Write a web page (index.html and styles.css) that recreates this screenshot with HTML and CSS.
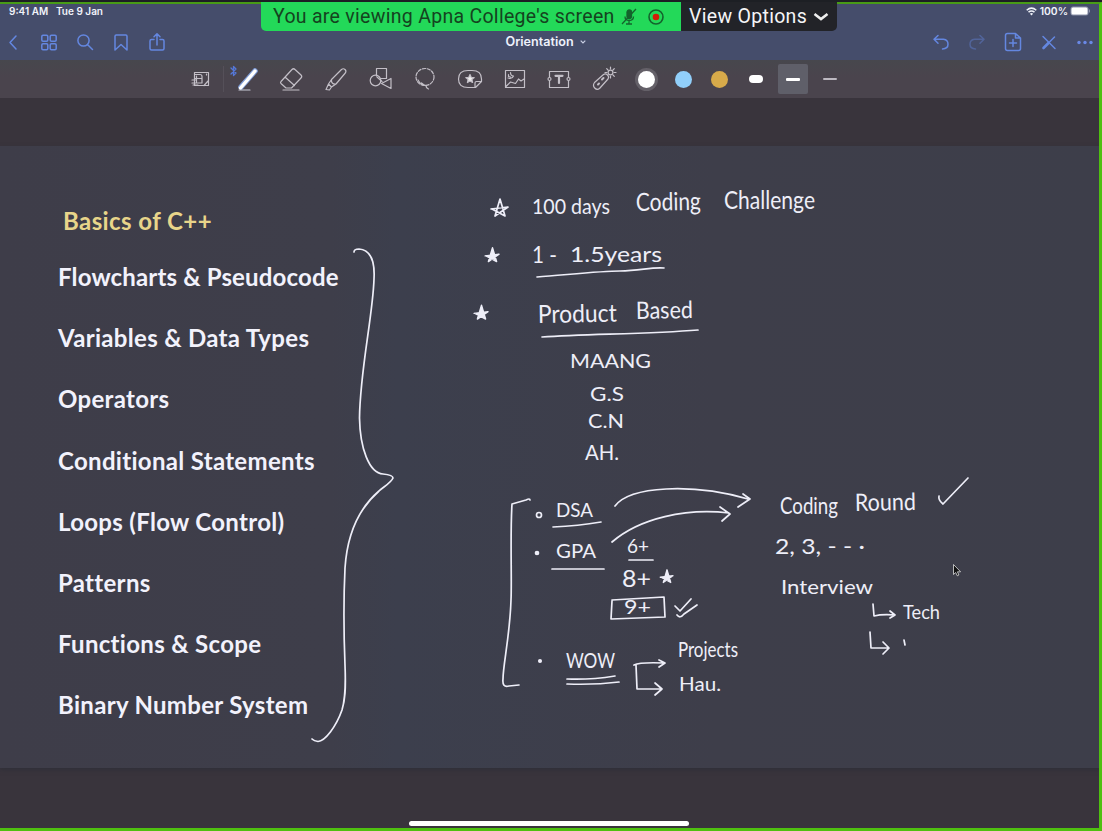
FILE: index.html
```html
<!DOCTYPE html>
<html lang="en">
<head>
<meta charset="utf-8">
<title>Orientation</title>
<link rel="stylesheet" href="styles.css">
</head>
<body>
<div class="screen">
  <header class="header">
    <div class="status">
      <span class="status-time">9:41 AM</span><span class="status-date">Tue 9 Jan</span>
      <span class="status-right">
        <svg width="11" height="9" viewBox="0 0 11 9" fill="none" stroke="#f1f3fa" stroke-width="1.5"><path d="M.7 3.2Q5.500-1 10.300 3.200M2.500 5.200Q5.500 2.700 8.500 5.200"/><path d="M5.500 8.500 3.900 6.700Q5.500 5.500 7.100 6.700Z" fill="#f1f3fa" stroke="none"/></svg>
        <span class="status-battery">100%</span>
        <svg width="21" height="10" viewBox="0 0 21 10"><rect x=".5" y=".5" width="18" height="9" rx="2.500" fill="#8b91a8"/><rect x="1.500" y="1.500" width="16" height="7" rx="1.500" fill="#fff"/><path d="M19.500 3.500v3" stroke="#8b91a8"/></svg>
      </span>
    </div>
    <nav class="nav">
      <div class="nav-group nav-left">
        <span class="btn"><svg width="20" height="20" viewBox="0 0 20 20"><path d="M13 4 7 10.500l6 6.500"/></svg></span>
        <span class="btn"><svg width="20" height="20" viewBox="0 0 20 20"><rect x="2.800" y="3.300" width="6" height="6" rx="1.200"/><rect x="11.200" y="3.300" width="6" height="6" rx="1.200"/><rect x="2.800" y="11.700" width="6" height="6" rx="1.200"/><rect x="11.200" y="11.700" width="6" height="6" rx="1.200"/></svg></span>
        <span class="btn"><svg width="20" height="20" viewBox="0 0 20 20"><circle cx="8.500" cy="8.500" r="5.600"/><path d="m12.700 12.700 4.800 4.800"/></svg></span>
        <span class="btn"><svg width="20" height="20" viewBox="0 0 20 20"><path d="M4 18V4.200Q4 3 5.200 3h9.600Q16 3 16 4.200V18l-6-5.500Z"/></svg></span>
        <span class="btn"><svg width="20" height="20" viewBox="0 0 20 20"><path d="M7 7.500H4.500Q3 7.500 3 9v7.500Q3 18 4.500 18h11q1.500 0 1.500-1.500V9q0-1.500-1.500-1.500H13M10 13V2M7 4.700 10 1.700l3 3"/></svg></span>
      </div>
      <div class="doc-title">Orientation <svg width="6" height="4" viewBox="0 0 6 4"><path d="m.7.700 2.300 2.300L5.300.7"/></svg></div>
      <div class="nav-group nav-right">
        <span class="btn"><svg width="20" height="20" viewBox="0 0 20 20"><path d="M7 3.500 3 7.300l4 4M3.500 7.300h9q4.500.5 4.500 5t-5.500 4.600"/></svg></span>
        <span class="btn btn-off"><svg width="20" height="20" viewBox="0 0 20 20"><path d="m13 3.500 4 3.800-4 4M16.500 7.300h-9Q3 7.800 3 12.300t5.500 4.600"/></svg></span>
        <span class="btn"><svg width="20" height="20" viewBox="0 0 20 20"><path d="M4.500 1.500h8L17.500 6v10.500q0 2-2 2h-11q-2 0-2-2v-13q0-2 2-2ZM12.500 1.500V6h5M10 7.500v7M6.500 11h7"/></svg></span>
        <span class="btn"><svg width="20" height="20" viewBox="0 0 20 20"><path d="m4 4.500 12 12M15.500 5 9.500 11"/><path d="m9.500 11-5 5" stroke-width="2.600"/></svg></span>
        <span class="btn"><svg width="20" height="20" viewBox="0 0 20 20"><g class="dots"><circle cx="4" cy="10.500" r="1.700"/><circle cx="10" cy="10.500" r="1.700"/><circle cx="16" cy="10.500" r="1.700"/></g></svg></span>
      </div>
    </nav>
  </header>

  <div class="tools">
    <span class="tool tool-view"><svg width="26" height="26" viewBox="0 0 26 26"><path d="M6.500 6.500h14v13h-14ZM7 8.500h5q2 0 2 2v6.500H7M7 12.500h6.500M8.500 10v6M4 14h4M4 17h5M5 19h5M20 15l-4 4.500M18.500 8v1"/></svg></span>
    <span class="tool"><svg width="40" height="34" viewBox="0 0 40 34"><path d="m4 6 5 5-2.500 2.500v-9L9 7l-5 5" stroke="#5578d8" stroke-width="1.300"/><path d="M14 25 28 9" stroke="#7f9cd6" stroke-width="5.500"/><path d="M13.500 26 28 9" stroke="#fff" stroke-width="3.400"/><path d="M12 28h11" stroke="#c9cbd8"/></svg></span>
    <span class="tool"><svg width="28" height="28" viewBox="0 0 28 28"><path d="m4 16.500 11-12q1.500-1.500 3 0l6 5.500q1.500 1.500 0 3L14.500 23H9l-5-4.500q-1-1 0-2ZM8.500 12.500l9 8M6 25h16"/></svg></span>
    <span class="tool"><svg width="28" height="28" viewBox="0 0 28 28"><path d="m9.500 14.500 10-10q1.800-1.500 3.500 0 1.700 1.600.3 3.500L14 19q-2 .5-3.500-.8t-1-3.700ZM9.500 14.500 6.500 19l3 3 4.500-3M6.500 19 4 24.500l3.500.5 2-3"/></svg></span>
    <span class="tool"><svg width="28" height="28" viewBox="0 0 28 28"><path d="M9.500 11V3.500h10v10H14"/><circle cx="8.500" cy="15.500" r="5.300"/><path d="m14.500 18.500 9.500-5v10ZM10 12l5 4.500"/></svg></span>
    <span class="tool"><svg width="28" height="28" viewBox="0 0 28 28"><ellipse cx="14" cy="12" rx="9" ry="8.500" stroke-dasharray="3.200 1.600"/><path d="M7 15q3 5.500 7 5.500M10.500 18q2.500 2.500 4.500 2.500 0 2.500 2.500 3.500"/></svg></span>
    <span class="tool"><svg width="28" height="28" viewBox="0 0 28 28"><path d="M18.500 22.500H12Q2.500 22.500 2.500 14T12 5.500h4Q25.500 5.500 25.500 14v2.500l-6 6ZM19 22v-4q0-1.500 1.500-1.500h5"/><path d="m14 9.500 1.200 2.800 3 .3-2.300 1.900.7 3-2.600-1.600-2.600 1.600.7-3-2.300-1.900 3-.3Z" fill="#eee"/></svg></span>
    <span class="tool"><svg width="28" height="28" viewBox="0 0 28 28"><path d="M4.500 5.500h19v17h-19ZM5 21.500l4.500-4.500 5 1.500 3-4.500 2.500 2 3-2M7 13q4 1.500 5.500-2-3 0-3-3.500M7.500 9.500v2l2 .5"/></svg></span>
    <span class="tool"><svg width="28" height="28" viewBox="0 0 28 28"><path d="M4.500 12V6.500h19V12M4.500 16v6.500h19V16"/><circle cx="4.500" cy="14" r="1.500"/><circle cx="23.500" cy="14" r="1.500"/><path d="M10.500 10.800h7M14 11v7" stroke-width="2.200"/></svg></span>
    <span class="tool"><svg width="28" height="28" viewBox="0 0 28 28"><path d="m4.500 17.500 9-8q2-1.500 4 .5t.5 4l-8.500 9.500q-2.500 2-4.800-.5t-.2-5.500Z"/><path d="m8 19.500 1-1M12 14.500l1.500-1.500" stroke-width="2"/><circle cx="20.500" cy="7.500" r="2.400"/><path d="M20.500 2v2M20.500 11v2M15 7.500h2M24 7.500h2M16.700 3.700 18 5M23 10l1.300 1.300M24.300 3.700 23 5"/></svg></span>
    <div class="swatches">
      <span class="swatch"><i class="dot dot-white"></i></span>
      <span class="swatch"><i class="dot dot-blue"></i></span>
      <span class="swatch"><i class="dot dot-gold"></i></span>
      <span class="swatch"><i class="pen pen-thick"></i></span>
      <span class="swatch"><b class="swatch-on"><i class="pen pen-mid"></i></b></span>
      <span class="swatch"><i class="pen pen-thin"></i></span>
    </div>
  </div>

  <main class="slide">
    <h1 class="slide-title">Basics of C++</h1>
    <ul class="topics">
      <li class="tight">Flowcharts &amp; Pseudocode</li>
      <li>Variables &amp; Data Types</li>
      <li>Operators</li>
      <li>Conditional Statements</li>
      <li>Loops (Flow Control)</li>
      <li>Patterns</li>
      <li>Functions &amp; Scope</li>
      <li>Binary Number System</li>
    </ul>
  </main>
  <footer class="footer"><div class="home-bar"></div></footer>
</div>

<!-- pen annotations on the free canvas -->
<svg class="ink" width="1102" height="831" viewBox="0 0 1102 831">
  <defs><path id="star" d="m-9 1 17-2L-5 8 0-9l5 17L-8 1"/></defs>
  <g class="stroke">
    <path d="M354 252Q354 249 359 249C371 250 375 262 374 279C373 315 360 370 359.500 418C360 448 369 473 383 474Q393 475 393 478C391 483 383 487 379 491C357 510 347 538 345 568C343 610 344 640 345 665C346 690 345 700 342 710C336 727 325 741 318 741.500Q314 741 312 739"/>
    <use href="#star" transform="translate(500 208)"/>
    <g class="star-solid">
      <use href="#star" transform="translate(492.500 255) scale(.82)"/>
      <use href="#star" transform="translate(481.500 312.500) scale(.82)"/>
      <use href="#star" transform="translate(667 576.500) scale(.75)"/>
    </g>
    <path d="M537 277C565 275 600 271 620 271S650 267 664 268M542 337C590 334 650 334 698 330"/>
    <path d="M530 500Q530 498 526 500L512 504C510 535 512 580 511 600C510 635 503 665 503 679Q502 688 509 686L519 685"/>
    <path d="M553 527Q578 526 601 522M552 569H604M629 560H653M567 679Q590 680 615 676M567 684Q595 685 619 682"/>
    <path d="M615 506C630 486 692 483 748 499M743 494l7 5-12 8M612 542C640 518 686 508 729 513M720 507l10 7-8 7"/>
    <path d="m612 600 52-3 1 20-54 2 1-18M675 606l5 5 11-12M677 615q3 4 7-1l13-9"/>
    <path d="M634 665Q640 662 664 663M659 660l6 3-6 4M636 665l1 24H661M655 683l7 6-7 6"/>
    <path d="M939 496q-1 4 4 8L968 478"/>
    <path d="m873 604 1 12Q882 614 895 615M890 611l5 4-5 3M870 632l1 16h18M883 642l6 6-6 6M904 640l1 5"/>
    <circle cx="539" cy="515" r="2.500"/><circle cx="537" cy="553" r="1.500" fill="#eeeef8"/><circle cx="540" cy="661" r="1.200" fill="#eeeef8"/>
  </g>
  <g class="hand">
    <text x="532" y="214" font-size="22" textLength="78" lengthAdjust="spacingAndGlyphs">100 days</text>
    <text x="636" y="211" font-size="25" textLength="65" lengthAdjust="spacingAndGlyphs" transform="rotate(-1 636 211)">Coding</text>
    <text x="724" y="209" font-size="25" textLength="91" lengthAdjust="spacingAndGlyphs">Challenge</text>
    <text x="532" y="263" font-size="23" textLength="25" lengthAdjust="spacingAndGlyphs">1 -</text>
    <text x="570" y="262" font-size="22" textLength="92" lengthAdjust="spacingAndGlyphs">1.5years</text>
    <text x="538" y="323" font-size="25" textLength="79" lengthAdjust="spacingAndGlyphs" transform="rotate(-1 538 323)">Product</text>
    <text x="636" y="319" font-size="24" textLength="57" lengthAdjust="spacingAndGlyphs" transform="rotate(-1 636 319)">Based</text>
    <text x="570" y="368" font-size="19" textLength="81" lengthAdjust="spacingAndGlyphs">MAANG</text>
    <text x="590" y="401" font-size="20" textLength="34" lengthAdjust="spacingAndGlyphs">G.S</text>
    <text x="588" y="428" font-size="19" textLength="36" lengthAdjust="spacingAndGlyphs">C.N</text>
    <text x="585" y="460" font-size="22" textLength="34" lengthAdjust="spacingAndGlyphs">AH.</text>
    <text x="556" y="517" font-size="19" textLength="37" lengthAdjust="spacingAndGlyphs">DSA</text>
    <text x="556" y="558" font-size="20" textLength="40" lengthAdjust="spacingAndGlyphs">GPA</text>
    <text x="627" y="553" font-size="20" textLength="22" lengthAdjust="spacingAndGlyphs">6+</text>
    <text x="622" y="587" font-size="23" textLength="29" lengthAdjust="spacingAndGlyphs">8+</text>
    <text x="624" y="614" font-size="19" textLength="27" lengthAdjust="spacingAndGlyphs">9+</text>
    <text x="566" y="668" font-size="22" textLength="49" lengthAdjust="spacingAndGlyphs">WOW</text>
    <text x="678" y="657" font-size="22" textLength="60" lengthAdjust="spacingAndGlyphs">Projects</text>
    <text x="679" y="691" font-size="20" textLength="42" lengthAdjust="spacingAndGlyphs">Hau.</text>
    <text x="780" y="514" font-size="24" textLength="58" lengthAdjust="spacingAndGlyphs">Coding</text>
    <text x="855" y="511" font-size="24" textLength="61" lengthAdjust="spacingAndGlyphs" transform="rotate(-1 855 511)">Round</text>
    <text x="775" y="554" font-size="22" textLength="90" lengthAdjust="spacingAndGlyphs">2, 3, - - ·</text>
    <text x="781" y="594" font-size="20" textLength="92" lengthAdjust="spacingAndGlyphs">Interview</text>
    <text x="903" y="619" font-size="20" textLength="37" lengthAdjust="spacingAndGlyphs">Tech</text>
  </g>
  <path d="M953.500 564.500v10l2.200-2 1.600 3.300 1.600-.8-1.500-3.200h3.200Z" fill="#111" stroke="#ddd" stroke-width=".8"/>
</svg>

<div class="share">
  <div class="share-msg"><span>You are viewing Apna College's screen</span>
    <svg width="18" height="18" viewBox="0 0 18 18" fill="none" stroke="#14632c" stroke-width="1.300"><rect x="7" y="2" width="4.500" height="8.500" rx="2.200" fill="#14632c"/><path d="M5 8.500q0 4 4.200 4T13.500 8.500M9 12.500V16M6 16h6M2 16 16 1"/></svg>
    <svg class="rec" width="18" height="18" viewBox="0 0 18 18"><circle cx="9" cy="9" r="7" fill="none" stroke="#14632c" stroke-width="1.600"/><circle cx="9" cy="9" r="3.300" fill="#d31d08"/></svg>
  </div>
  <div class="share-opts"><span>View Options</span><svg width="16" height="10" viewBox="0 0 16 10" fill="none" stroke="#eee" stroke-width="2.600"><path d="m1.500 2 6.500 5 6.500-5"/></svg></div>
</div>
</body>
</html>
```
FILE: styles.css
```css
* { box-sizing: border-box; }
body { margin: 0; width: 1102px; height: 831px; overflow: hidden; position: relative; background: #39343c; font-family: Inter, "Liberation Sans", sans-serif; }
.screen { width: 1102px; height: 831px; display: flex; flex-direction: column; border-top: 2px solid #1d1f24; }
.screen::after { content: ""; position: absolute; inset: 2px 0 0 0; border: solid #4fc010; border-width: 2px 3px 3px 0; border-top-color: #489b16; }
.header { height: 58px; padding-top: 2px; background: #454d6b; display: flex; flex-direction: column; flex: none; }
.status { display: flex; height: 14px; flex: none; align-items: center; padding: 0 11px 0 9px; color: #f1f3fa; font-size: 10.300px; font-weight: 600; }
.status-time { width: 47px; white-space: nowrap; font-size: 10px; }
.status-date { white-space: nowrap; font-size: 10px; }
.status-right { margin-left: auto; display: flex; align-items: center; gap: 3px; }
.status-right svg:last-child { margin-left: -1px; }
.nav { display: flex; align-items: center; height: 44px; flex: none; padding-top: 3px; }
.nav-group { display: flex; width: 179px; }
.nav-left { margin-left: -4.500px; }
.nav-right { margin-left: auto; margin-right: -.5px; }
.btn { width: 35.800px; height: 44px; display: flex; align-items: center; justify-content: center; }
.btn svg { fill: none; stroke: #6487e0; stroke-width: 1.500; stroke-linecap: round; stroke-linejoin: round; }
.dots { fill: #6a88e6; stroke: none; }
.btn-off { opacity: .4; }
.doc-title { margin-left: 331px; font-size: 12.600px; font-weight: 600; color: #eef1fb; white-space: nowrap; display: flex; align-items: center; gap: 6px; }
.doc-title svg { fill: none; stroke: #c9cfe4; stroke-width: 1.200; }
.tools { height: 38px; padding-left: 179.500px; background: linear-gradient(#47474d, #4a444d 45%); display: flex; align-items: center; flex: none; }
.tool { width: 44.700px; display: flex; justify-content: center; }
.tool-view { border-right: 1px solid #555059; }
.tool svg { fill: none; stroke: #c3bfc7; stroke-width: 1.200; stroke-linecap: round; stroke-linejoin: round; flex: none; }
.swatches { display: flex; margin-left: 2px; }
.swatch { width: 36.600px; height: 30px; display: flex; align-items: center; justify-content: center; }
.swatch-on { width: 30px; height: 30px; display: flex; align-items: center; justify-content: center; background: #5f5f69; border-radius: 2px; }
.dot { width: 17px; height: 17px; border-radius: 50%; }
.dot-white { background: #fff; box-shadow: 0 0 0 3px #646068; }
.dot-blue { background: #91cffa; }
.dot-gold { background: #d7aa4a; }
.pen { background: #fff; border-radius: 5px; }
.pen-thick { width: 14px; height: 8px; }
.pen-mid { width: 14px; height: 3px; border-radius: 1px; }
.pen-thin { width: 14px; height: 2px; background: #bdb9c1; }
.slide { margin-top: 48px; height: 622px; flex: none; padding: 57px 0 0 58px; background: linear-gradient(90deg, #3e3d49 0, #3e3e4a 30%, #3c3f4d 36%, #3e3e4a 65%, #3d3e4a); font-family: Lato, sans-serif; box-shadow: 0 2px 4px #303039; }
.slide-title { margin: 0 0 0 5px; height: 35px; line-height: 35px; font-size: 24px; font-weight: 700; color: #e8d58a; letter-spacing: .420px; white-space: nowrap; }
.topics { margin: 8px 0 0; padding: 0; list-style: none; }
.topics li { height: 61.200px; line-height: 61.200px; font-size: 24px; font-weight: 700; color: #f2f2fc; letter-spacing: .310px; white-space: nowrap; }
.topics .tight { letter-spacing: .150px; }
.footer { flex: 1; display: flex; align-items: flex-end; justify-content: center; padding: 0 4px 5px 0; }
.home-bar { width: 280px; height: 5px; border-radius: 3px; background: #fff; }
.ink { position: absolute; left: 0; top: 0; }
.stroke { fill: none; stroke: #eeeef8; stroke-width: 1.700; stroke-linecap: round; stroke-linejoin: round; }
.star-solid { fill: #eeeef8; }
.hand { fill: #eeeef8; font-family: Lato, sans-serif; font-weight: 400; }
.share { position: absolute; left: 261px; top: 2px; width: 576px; height: 29px; display: flex; border-radius: 0 0 5px 5px; overflow: hidden; font-family: Roboto, sans-serif; z-index: 2; }
.share-msg { width: 420px; padding-left: 12px; background: #23d959; color: #15431f; display: flex; align-items: center; font-size: 19.500px; white-space: nowrap; }
.share-msg span { width: 347px; letter-spacing: .290px; }
.rec { margin-left: 9px; }
.share-opts { width: 156px; padding-left: 8px; background: #222328; color: #f5f5f7; display: flex; align-items: center; gap: 6px; font-size: 19.500px; letter-spacing: .300px; white-space: nowrap; }
```
